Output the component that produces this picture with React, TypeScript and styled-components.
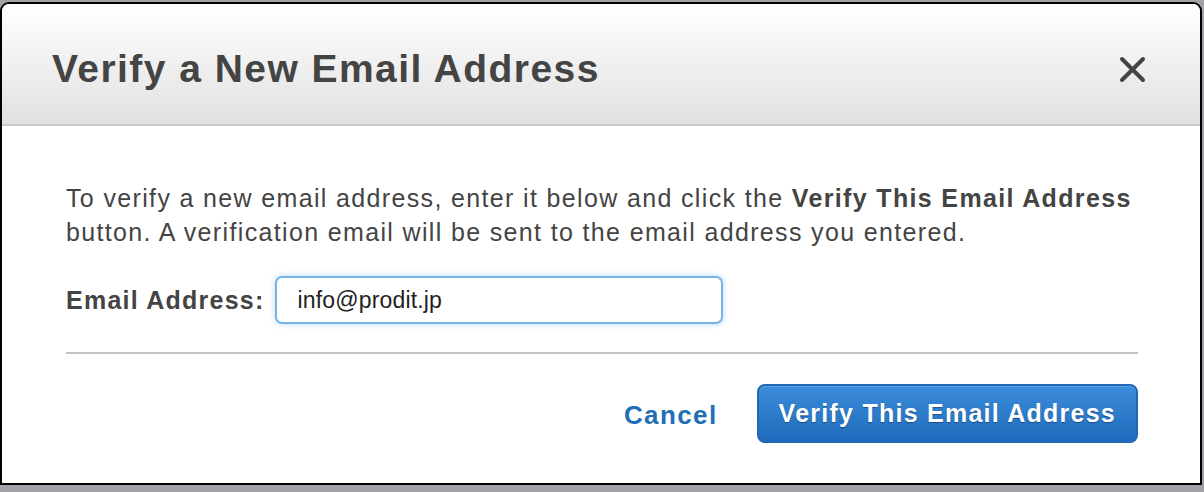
import React from "react";
import styled, { createGlobalStyle } from "styled-components";

const Global = createGlobalStyle`
  html, body { margin: 0; padding: 0; background: #a0a2a7; }
  body { font-family: "Liberation Sans", Arial, Helvetica, sans-serif; }
  * { box-sizing: border-box; }
`;

const Page = styled.div`
  padding-top: 2px;
  height: 492px;
`;

const Dialog = styled.div`
  width: 1202px;
  height: 483px;
  background: #fff;
  border: 2px solid #000;
  border-radius: 9px 9px 0 0;
  overflow: hidden;
  display: flex;
  flex-direction: column;
`;

const Header = styled.div`
  height: 122px;
  flex: none;
  display: flex;
  align-items: center;
  justify-content: space-between;
  padding: 10px 53px 0 50px;
  background: linear-gradient(#ffffff, #e1e1e1);
  border-bottom: 2px solid #cacaca;
`;

const Title = styled.h1`
  margin: 0;
  font-size: 39px;
  font-weight: bold;
  color: #444;
  letter-spacing: 1.45px;
`;

const Close = styled.button`
  border: 0;
  background: transparent;
  padding: 0;
  width: 30px;
  height: 30px;
  display: flex;
  align-items: center;
  justify-content: center;
  cursor: pointer;
`;

const Body = styled.div`
  padding: 55px 62px 0 64px;
  display: flex;
  flex-direction: column;
`;

const Intro = styled.p`
  margin: 0;
  font-size: 25px;
  line-height: 34px;
  letter-spacing: 1.35px;
  color: #444;
  b { font-weight: bold; }
`;

const FieldRow = styled.div`
  display: flex;
  align-items: center;
  gap: 10px;
  margin-top: 27px;
`;

const Label = styled.label`
  font-size: 25px;
  font-weight: bold;
  letter-spacing: 1.25px;
  color: #444;
`;

const Input = styled.input`
  width: 448px;
  height: 48px;
  border: 2px solid #78b3e6;
  border-radius: 7px;
  box-shadow: 0 0 6px rgba(100, 170, 235, 0.45);
  padding: 0 21px;
  font-family: "Liberation Sans", Arial, sans-serif;
  font-size: 23px;
  letter-spacing: 0.15px;
  color: #222;
  outline: none;
`;

const Divider = styled.hr`
  margin: 28px 0 0 0;
  border: 0;
  height: 2px;
  background: #c2c2c2;
`;

const Footer = styled.div`
  display: flex;
  justify-content: flex-end;
  align-items: center;
  gap: 39px;
  margin-top: 30px;
`;

const LinkButton = styled.button`
  border: 0;
  background: transparent;
  font-family: "Liberation Sans", Arial, sans-serif;
  font-size: 26px;
  font-weight: bold;
  letter-spacing: 1.4px;
  color: #1f6fb6;
  padding: 0;
  margin-top: 3px;
  cursor: pointer;
`;

const PrimaryButton = styled.button`
  height: 59px;
  padding: 0 20px;
  border: 2px solid #2267b5;
  border-radius: 8px;
  background: linear-gradient(#3c8ddb, #1f6bbd);
  color: #fff;
  font-family: "Liberation Sans", Arial, sans-serif;
  font-size: 25px;
  font-weight: bold;
  letter-spacing: 1.25px;
  text-shadow: 0 1px 1px rgba(0, 0, 0, 0.35);
  box-shadow: inset 0 1px 0 rgba(255, 255, 255, 0.2);
  cursor: pointer;
`;

export default function App() {
  return (
    <Page>
      <Global />
      <Dialog>
        <Header>
          <Title>Verify a New Email Address</Title>
          <Close aria-label="Close">
            <svg width="27" height="27" viewBox="0 0 27 27">
              <path d="M3 3 L24 24 M24 3 L3 24" stroke="#444" strokeWidth="4" strokeLinecap="round" />
            </svg>
          </Close>
        </Header>
        <Body>
          <Intro>
            To verify a new email address, enter it below and click the <b>Verify This Email Address</b> button. A verification email will be sent to the email address you entered.
          </Intro>
          <FieldRow>
            <Label>Email Address:</Label>
            <Input defaultValue="info@prodit.jp" />
          </FieldRow>
          <Divider />
          <Footer>
            <LinkButton>Cancel</LinkButton>
            <PrimaryButton>Verify This Email Address</PrimaryButton>
          </Footer>
        </Body>
      </Dialog>
    </Page>
  );
}
